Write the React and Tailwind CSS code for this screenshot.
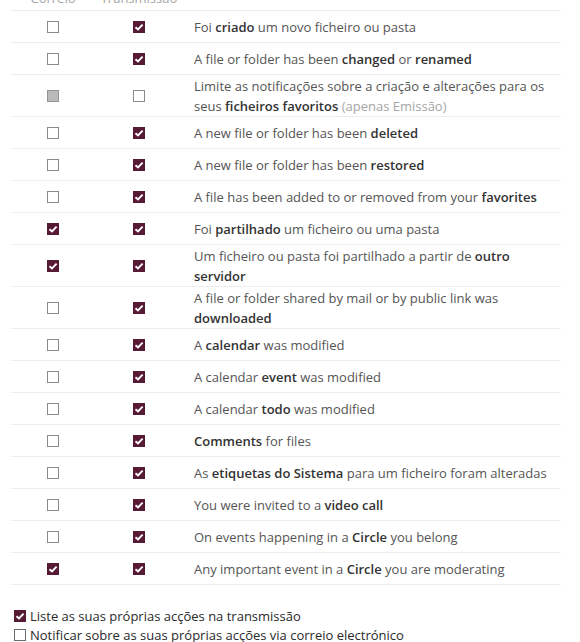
import React from 'react';

const rows = [
  { mail: 'off', stream: 'on', text: <>Foi <b>criado</b> um novo ficheiro ou pasta</> },
  { mail: 'off', stream: 'on', text: <>A file or folder has been <b>changed</b> or <b>renamed</b></> },
  {
    mail: 'disabled',
    stream: 'off',
    text: (
      <>
        Limite as notificações sobre a criação e alterações para os seus <b>ficheiros favoritos</b>{' '}
        <span className="text-[#a5a5a5]">(apenas Emissão)</span>
      </>
    ),
  },
  { mail: 'off', stream: 'on', text: <>A new file or folder has been <b>deleted</b></> },
  { mail: 'off', stream: 'on', text: <>A new file or folder has been <b>restored</b></> },
  { mail: 'off', stream: 'on', text: <>A file has been added to or removed from your <b>favorites</b></> },
  { mail: 'on', stream: 'on', text: <>Foi <b>partilhado</b> um ficheiro ou uma pasta</> },
  { mail: 'on', stream: 'on', text: <>Um ficheiro ou pasta foi partilhado a partir de <b>outro servidor</b></> },
  { mail: 'off', stream: 'on', text: <>A file or folder shared by mail or by public link was <b>downloaded</b></> },
  { mail: 'off', stream: 'on', text: <>A <b>calendar</b> was modified</> },
  { mail: 'off', stream: 'on', text: <>A calendar <b>event</b> was modified</> },
  { mail: 'off', stream: 'on', text: <>A calendar <b>todo</b> was modified</> },
  { mail: 'off', stream: 'on', text: <><b>Comments</b> for files</> },
  { mail: 'off', stream: 'on', text: <>As <b>etiquetas do Sistema</b> para um ficheiro foram alteradas</> },
  { mail: 'off', stream: 'on', text: <>You were invited to a <b>video call</b></> },
  { mail: 'off', stream: 'on', text: <>On events happening in a <b>Circle</b> you belong</> },
  { mail: 'on', stream: 'on', text: <>Any important event in a <b>Circle</b> you are moderating</> },
];

// small checkbox square, three states
function Box({ state, thin }) {
  if (state === 'on') {
    return (
      <span className="inline-flex w-[12px] h-[12px] bg-[#561a35] items-center justify-center align-middle">
        <svg width="10" height="10" viewBox="0 0 10 10">
          <path d="M1.5 5.2 L4 7.5 L8.6 2.6" stroke="#fff" strokeWidth="1.9" fill="none" />
        </svg>
      </span>
    );
  }
  if (state === 'disabled') {
    return <span className="inline-block w-[12px] h-[12px] bg-[#bababa] border border-[#959595] align-middle" />;
  }
  return (
    <span
      className={
        'inline-block w-[12px] h-[12px] bg-white border align-middle ' +
        (thin ? 'border-[#6b6b6b]' : 'border-[#8a8a8a]')
      }
    />
  );
}

export default function App() {
  return (
    <div className="w-[580px] h-[642px] overflow-hidden bg-white font-['Open_Sans',sans-serif] text-[13px]">
      <table className="ml-[11px] w-[550px] border-collapse -mt-[13px]">
        <thead>
          <tr className="border-b border-[#ededed]">
            <th className="w-[84px] h-[23px] font-normal text-[#a5a5a5] text-center leading-[20px]">Correio</th>
            <th className="w-[88px] font-normal text-[#a5a5a5] text-center leading-[20px]">Transmissão</th>
            <th />
          </tr>
        </thead>
        <tbody>
          {rows.map((r, i) => (
            <tr key={i} className="border-b border-[#ededed] h-[32px]">
              <td className="text-center leading-none p-0">
                <Box state={r.mail} />
              </td>
              <td className="text-center leading-none p-0">
                <Box state={r.stream} />
              </td>
              <td className="pl-[11px] pr-2 pt-px pb-0 leading-[20px] text-[#555] [&_b]:font-semibold [&_b]:text-[#333]">
                {r.text}
              </td>
            </tr>
          ))}
        </tbody>
      </table>

      <div className="mt-[22px] ml-[14px] flex flex-col text-[13px] text-[#2a2a2a] leading-[19px]">
        <label className="flex items-center gap-[4px]">
          <Box state="on" />
          <span>Liste as suas próprias acções na transmissão</span>
        </label>
        <label className="flex items-center gap-[4px]">
          <Box state="off" thin />
          <span>Notificar sobre as suas próprias acções via correio electrónico</span>
        </label>
      </div>
    </div>
  );
}
